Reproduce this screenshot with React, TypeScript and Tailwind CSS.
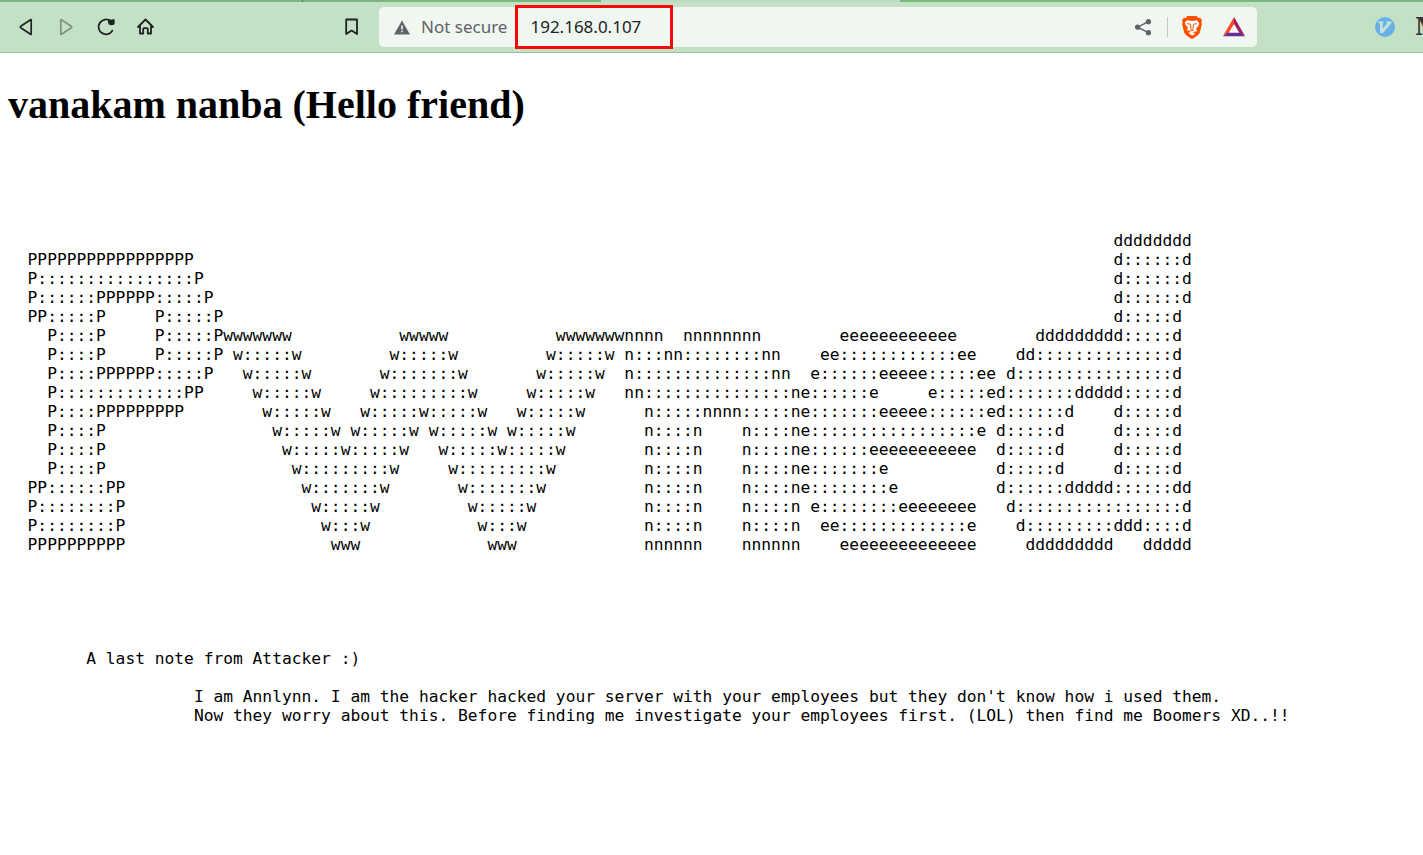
import React from "react";

type Glyph = { width: number; rows: string[] };

const blank = (n: number): string[] => Array(n).fill("");

const P: Glyph = {
  width: 20,
  rows: [
    "",
    "PPPPPPPPPPPPPPPPP",
    "P::::::::::::::::P",
    "P::::::PPPPPP:::::P",
    "PP:::::P     P:::::P",
    "  P::::P     P:::::P",
    "  P::::P     P:::::P",
    "  P::::PPPPPP:::::P",
    "  P:::::::::::::PP",
    "  P::::PPPPPPPPP",
    "  P::::P",
    "  P::::P",
    "  P::::P",
    "PP::::::PP",
    "P::::::::P",
    "P::::::::P",
    "PPPPPPPPPP",
  ],
};

const W: Glyph = {
  width: 41,
  rows: [
    ...blank(5),
    "wwwwwww           wwwww           wwwwwww",
    " w:::::w         w:::::w         w:::::w",
    "  w:::::w       w:::::::w       w:::::w",
    "   w:::::w     w:::::::::w     w:::::w",
    "    w:::::w   w:::::w:::::w   w:::::w",
    "     w:::::w w:::::w w:::::w w:::::w",
    "      w:::::w:::::w   w:::::w:::::w",
    "       w:::::::::w     w:::::::::w",
    "        w:::::::w       w:::::::w",
    "         w:::::w         w:::::w",
    "          w:::w           w:::w",
    "           www             www",
  ],
};

const N: Glyph = {
  width: 18,
  rows: [
    ...blank(5),
    "nnnn  nnnnnnnn",
    "n:::nn::::::::nn",
    "n::::::::::::::nn",
    "nn:::::::::::::::n",
    "  n:::::nnnn:::::n",
    "  n::::n    n::::n",
    "  n::::n    n::::n",
    "  n::::n    n::::n",
    "  n::::n    n::::n",
    "  n::::n    n::::n",
    "  n::::n    n::::n",
    "  nnnnnn    nnnnnn",
  ],
};

const E: Glyph = {
  width: 20,
  rows: [
    ...blank(5),
    "    eeeeeeeeeeee",
    "  ee::::::::::::ee",
    " e::::::eeeee:::::ee",
    "e::::::e     e:::::e",
    "e:::::::eeeee::::::e",
    "e:::::::::::::::::e",
    "e::::::eeeeeeeeeee",
    "e:::::::e",
    "e::::::::e",
    " e::::::::eeeeeeee",
    "  ee:::::::::::::e",
    "    eeeeeeeeeeeeee",
  ],
};

const D: Glyph = {
  width: 20,
  rows: [
    "            dddddddd",
    "            d::::::d",
    "            d::::::d",
    "            d::::::d",
    "            d:::::d",
    "    ddddddddd:::::d",
    "  dd::::::::::::::d",
    " d::::::::::::::::d",
    "d:::::::ddddd:::::d",
    "d::::::d    d:::::d",
    "d:::::d     d:::::d",
    "d:::::d     d:::::d",
    "d:::::d     d:::::d",
    "d::::::ddddd::::::dd",
    " d:::::::::::::::::d",
    "  d:::::::::ddd::::d",
    "   ddddddddd   ddddd",
  ],
};

const banner = P.rows
  .map((_, row) => "  " + [P, W, N, E, D].map((g) => g.rows[row].padEnd(g.width)).join(""))
  .join("\n");

const note = [
  "        A last note from Attacker :)",
  "",
  "                   I am Annlynn. I am the hacker hacked your server with your employees but they don't know how i used them.",
  "                   Now they worry about this. Before finding me investigate your employees first. (LOL) then find me Boomers XD..!!",
].join("\n");

const navButton = "flex size-5 items-center justify-center";

function Toolbar() {
  return (
    <header className="flex h-[53px] shrink-0 flex-col border-b border-[#9dbd9f] bg-[#c5e1c5]">
      <div className="flex h-0.5 shrink-0" aria-hidden="true">
        <div className="w-[302px] bg-[#77b97c]" />
        <div className="w-px bg-[#4c7a50]" />
        <div className="w-[298px] bg-[#77b97c]" />
        <div className="w-[299px] bg-[#bfdcc2]" />
        <div className="flex-1 bg-[#77b97c]" />
      </div>
      <div className="flex flex-1 items-center overflow-hidden pl-4">
        <nav className="flex gap-5" aria-label="Browser navigation">
          <button type="button" aria-label="Back" className={navButton}>
            <svg viewBox="0 0 20 20" className="size-5" fill="none" stroke="#202124" strokeWidth="1.7" strokeLinejoin="round">
              <path d="M15.200 3v14q0 .6-.6.200L4.700 10.700q-.9-.7 0-1.400l9.900-6.500q.6-.4.600.200z" />
            </svg>
          </button>
          <button type="button" aria-label="Forward" className={navButton}>
            <svg viewBox="0 0 20 20" className="size-5" fill="none" stroke="#7f9280" strokeWidth="1.7" strokeLinejoin="round">
              <path d="M4.800 3v14q0 .6.600.200l9.900-6.500q.9-.7 0-1.400L5.400 2.800q-.6-.4-.6.200z" />
            </svg>
          </button>
          <button type="button" aria-label="Reload" className={navButton}>
            <svg viewBox="0 0 20 20" className="size-5" fill="none" stroke="#202124" strokeWidth="1.8" strokeLinecap="round">
              <path d="M16.400 13.600A7.400 7.400 0 1 1 14.500 4" />
              <path d="M13 3.200q2.600.8 4.600-.2.800 2-.2 4-2 .8-4-.2-1-1.600-.4-3.600z" fill="#202124" />
            </svg>
          </button>
          <button type="button" aria-label="Home" className={navButton}>
            <svg viewBox="0 0 20 20" className="size-5" fill="none" stroke="#202124" strokeWidth="1.8" strokeLinejoin="round" strokeLinecap="round">
              <path d="M2 10L9.500 2.500 17 10M4 9v7.500h3.200V12q0-.8.800-.8h3q.8 0 .8.800v4.500H15V9" />
            </svg>
          </button>
        </nav>
        <button type="button" aria-label="Bookmark this page" className="ml-[186px] flex size-5 items-center justify-center">
          <svg viewBox="0 0 20 20" className="size-5" fill="none" stroke="#202124" strokeWidth="1.8" strokeLinejoin="round">
            <path d="M4.200 2.500h10.800v14.600L9.600 13.600 4.200 17.100z" />
          </svg>
        </button>
        <div className="ml-[17px] flex h-10 min-w-0 flex-1 items-center rounded-[5px] bg-[#f0f7f0] pr-[11px] pl-3.5 font-['Noto_Sans',sans-serif] text-[17px]">
          <svg viewBox="0 0 18 18" className="size-[18px] shrink-0" aria-hidden="true">
            <path d="M9 2.500L17 16.500H1z" fill="#5f6368" />
            <path d="M8.200 7.500h1.600v4H8.200zM8.200 12.700h1.600v1.600H8.200z" fill="#f0f7f0" />
          </svg>
          <span className="ml-2.5 shrink-0 text-[#5f6368]">Not secure</span>
          <div className="relative ml-2 flex h-11 w-[158px] shrink-0 items-center">
            <span className="ml-0.5 h-5 w-px bg-[#a9afab]" />
            <input
              type="text"
              aria-label="Address"
              defaultValue="192.168.0.107"
              className="ml-3 w-32 bg-transparent text-[#202124] outline-none"
            />
            <span className="pointer-events-none absolute inset-0 border-[3px] border-[#f80808]" />
          </div>
          <div className="ml-auto flex items-center">
            <button type="button" aria-label="Share" className={navButton}>
              <svg viewBox="0 0 20 20" className="size-5" stroke="#5f6368" strokeWidth="1.5" fill="#5f6368">
                <path d="M15.400 4.700L4.600 10.200l10.800 5.500" fill="none" />
                <circle cx="15.400" cy="4.700" r="1.900" />
                <circle cx="4.600" cy="10.200" r="1.900" />
                <circle cx="15.400" cy="15.700" r="1.900" />
              </svg>
            </button>
            <span className="mx-3.5 h-5 w-px bg-[#c3c9c5]" />
            <button type="button" aria-label="Brave Shields" className="flex h-6 w-5 items-center justify-center">
              <svg viewBox="0 0 20 23" className="h-[23px] w-5">
                <path d="M5.500 0h9l2 2 1.700-.2L20 4.300l-.6 1.700.6 1.800-2.200 8.600q-.5 1.700-2 2.800l-4.600 3.200q-1.200.8-2.400 0L4.200 19.200q-1.500-1.100-2-2.800L0 7.800.6 6 0 4.300l1.800-2.500 1.700.2z" fill="#ff5000" />
                <path d="M5.300 4.300L10 5l4.700-.7 2.500 3-.6 2.200-2.600 3.300.9 2-.8 1-1.700-.3-1.200 1 2.200 1.600L10 19.500l-3.400-2.400 2.200-1.600-1.200-1-1.700.3-.8-1 .9-2-2.600-3.300-.6-2.200z" fill="#fff" />
                <path d="M5.200 7.600l3.200.6.500 1.200-.3 2.600 1.400 1.500 1.400-1.500-.3-2.600.5-1.200 3.200-.6M8.200 13.700l1.800 1 1.800-1" fill="none" stroke="#ff5000" strokeWidth="1" />
              </svg>
            </button>
            <button type="button" aria-label="Rewards" className="ml-5 flex h-5 w-6 items-center justify-center">
              <svg viewBox="0 0 24 20" className="h-5 w-6">
                <path d="M12 0L1 19l6.500-4L12 7.500z" fill="#ff4724" />
                <path d="M12 0l11 19-6.500-4L12 7.500z" fill="#9e1f63" />
                <path d="M1 19.300h22L18 15.500H6z" fill="#662d91" />
                <path d="M12 7l5 8.500H7z" fill="#fff" />
              </svg>
            </button>
          </div>
        </div>
        <div className="ml-[118px] flex w-12 shrink-0 items-center gap-5 overflow-hidden">
          <button type="button" aria-label="Vimium" className="flex size-5 shrink-0 items-center justify-center">
            <svg viewBox="0 0 20 20" className="size-5">
              <circle cx="10" cy="10" r="10" fill="#67b1e6" />
              <path d="M3 4.500h5.500v1.500l-.8.300v5.200l4.500-5-.7-.500V4.500h5v1.500L8 16H5V6.300L3 6z" fill="#c7e0d8" />
            </svg>
          </button>
          <button type="button" aria-label="Extension" className="flex h-5 shrink-0 items-center font-['DejaVu_Serif',serif] text-2xl font-bold text-[#333]">
            M
          </button>
        </div>
      </div>
    </header>
  );
}

export default function App() {
  return (
    <div className="flex min-h-screen flex-col bg-white text-black">
      <Toolbar />
      <main className="overflow-x-auto overflow-y-hidden px-2 pt-7">
        <h1 className="mb-[103px] font-['Liberation_Serif',serif] text-[40px] leading-[47px] font-bold">
          vanakam nanba (Hello friend)
        </h1>
        <div className="[zoom:1.25]">
          <pre className="font-['DejaVu_Sans_Mono',monospace] text-[13px] leading-[normal]">
            {banner + "\n".repeat(6) + note}
          </pre>
        </div>
      </main>
    </div>
  );
}
